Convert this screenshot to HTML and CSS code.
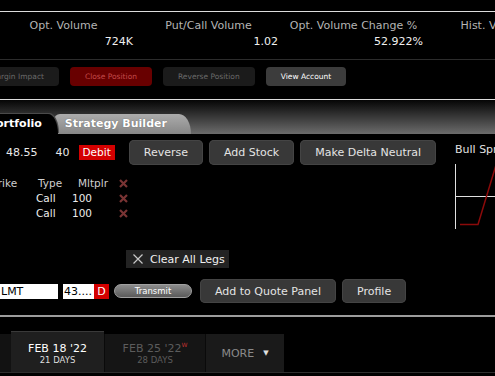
FILE: index.html
```html
<!DOCTYPE html>
<html lang="en">
<head>
    <meta charset="UTF-8">
    <meta name="viewport" content="width=device-width, initial-scale=1.0">
    <title>Strategy Builder</title>
    <link rel="stylesheet" href="styles.css">
</head>
<body>
    <div class="top-rule"></div>

    <div class="stats">
        <div class="stat"><div class="stat-label">Opt. Volume</div><div class="stat-value">724K</div></div>
        <div class="stat"><div class="stat-label">Put/Call Volume</div><div class="stat-value">1.02</div></div>
        <div class="stat"><div class="stat-label">Opt. Volume Change %</div><div class="stat-value">52.922%</div></div>
        <div class="stat"><div class="stat-label">Hist. Volatility</div><div class="stat-value">31.4%</div></div>
    </div>

    <div class="actions">
        <button class="action off">Margin Impact</button>
        <button class="action close">Close Position</button>
        <button class="action off">Reverse Position</button>
        <button class="action on">View Account</button>
    </div>

    <div class="tabbar">
        <div class="tab active">Portfolio</div>
        <div class="tab strategy">Strategy Builder</div>
    </div>

    <div class="builder">
        <div class="legs">
            <div class="summary">
                <span class="price">48.55</span>
                <span class="qty">40</span>
                <span class="debit">Debit</span>
                <button class="btn first">Reverse</button>
                <button class="btn">Add Stock</button>
                <button class="btn">Make Delta Neutral</button>
            </div>

            <div class="leg-table">
                <span class="head strike">Strike</span>
                <span class="head type">Type</span>
                <span class="head mult">Mltplr</span>
                <span class="del"><svg width="9" height="9" viewBox="0 0 9 9"><path d="M1 1L8 8M8 1L1 8" stroke="#7a3434" stroke-width="2.2"/></svg></span>

                <span></span>
                <span>Call</span>
                <span>100</span>
                <span class="del"><svg width="9" height="9" viewBox="0 0 9 9"><path d="M1 1L8 8M8 1L1 8" stroke="#7a3434" stroke-width="2.2"/></svg></span>

                <span></span>
                <span>Call</span>
                <span>100</span>
                <span class="del"><svg width="9" height="9" viewBox="0 0 9 9"><path d="M1 1L8 8M8 1L1 8" stroke="#7a3434" stroke-width="2.2"/></svg></span>
            </div>

            <div class="clear-row">
                <button class="clear">
                    <svg width="10" height="10" viewBox="0 0 10 10"><path d="M0.5 0.5L9.5 9.5M9.5 0.5L0.5 9.5" stroke="#c8c8c8" stroke-width="1.2"/></svg>
                    Clear All Legs
                </button>
            </div>

            <div class="order">
                <span class="field lmt">LMT</span>
                <span class="field limit">43....</span><span class="side">D</span>
                <button class="transmit">Transmit</button>
                <button class="btn quote">Add to Quote Panel</button>
                <button class="btn">Profile</button>
            </div>
        </div>

        <div class="payoff">
            <div class="payoff-title">Bull Spread</div>
            <svg class="payoff-chart" width="60" height="65" viewBox="0 0 60 65">
                <path d="M0.5 0V65" stroke="#e0e0e0" stroke-width="1"/>
                <path d="M0 32.5H60" stroke="#e0e0e0" stroke-width="1"/>
                <path d="M5 60.5H23L41 1" stroke="#8b0a0a" stroke-width="1.5" fill="none"/>
            </svg>
        </div>
    </div>

    <div class="expiry-area">
        <div class="expiries">
            <div class="expiry prev"></div>
            <div class="expiry current">
                <div class="exp-date">FEB 18 '22</div>
                <div class="exp-days">21 DAYS</div>
            </div>
            <div class="expiry">
                <div class="exp-date">FEB 25 '22<sup class="weekly">W</sup></div>
                <div class="exp-days">28 DAYS</div>
            </div>
            <div class="expiry more">MORE <span class="caret">&#9660;</span></div>
        </div>
    </div>
</body>
</html>
```

FILE: styles.css
```css
body {
    margin: 0;
    background: #000;
    color: #e8e8e8;
    font-family: "DejaVu Sans", sans-serif;
    font-size: 11px;
    overflow: hidden;
    height: 376px;
}
button {
    font-family: "DejaVu Sans", sans-serif;
    border: none;
    padding: 0;
    cursor: pointer;
}
.top-rule {
    margin-top: 11px;
    height: 1px;
    background: #dcdcdc;
}
.stats {
    display: flex;
    height: 48px;
    box-sizing: border-box;
    padding-top: 6px;
    margin-left: -9px;
    border-bottom: 1px solid #2c2c2c;
}
.stat {
    width: 145px;
    flex-shrink: 0;
    line-height: 16px;
}
.stat-label {
    text-align: center;
    color: #b4b4b4;
}
.stat-value {
    text-align: right;
    padding-right: 3px;
    color: #f0f0f0;
}
.actions {
    display: flex;
    gap: 11px;
    height: 40px;
    box-sizing: border-box;
    padding-top: 7px;
    margin-left: -25px;
    border-bottom: 1px solid #dcdcdc;
}
.action {
    height: 19px;
    padding: 0 15px;
    font-size: 7.5px;
    border-radius: 4px;
}
.action.off {
    background: #1b1b1b;
    color: #6a6a6a;
}
.action.close {
    background: #680000;
    color: #c24a4a;
}
.action.on {
    background: #3c3c3c;
    color: #fff;
}
.tabbar {
    display: flex;
    align-items: flex-end;
    height: 34px;
    background: linear-gradient(#050505, #6c6c6c);
}
.tab {
    height: 20px;
    line-height: 20px;
    font-weight: bold;
    color: #fff;
}
.tab.active {
    background: #000;
    margin-left: -20px;
    padding: 0 16px 0 8px;
    border-radius: 0 10px 0 0 / 0 20px 0 0;
    position: relative;
    z-index: 1;
    box-shadow: 1px -1px 0 #4a4a4a;
}
.tab.strategy {
    background: linear-gradient(#acacac, #868686);
    margin-left: -4px;
    padding: 0 24px 0 11px;
    border-radius: 6px 12px 0 0 / 6px 20px 0 0;
    text-shadow: 0 0 1px #555;
}
.builder {
    display: flex;
    padding-top: 6px;
}
.legs {
    width: 455px;
    flex-shrink: 0;
}
.summary {
    display: flex;
    align-items: center;
    height: 25px;
    color: #e8e8e8;
}
.price {
    margin-left: 6px;
}
.qty {
    margin-left: 18px;
}
.debit {
    margin-left: 9px;
    height: 15px;
    line-height: 15px;
    padding: 0 4px;
    background: #d40000;
    color: #fff;
    font-size: 10.5px;
}
.btn {
    height: 25px;
    padding: 0 15px;
    margin-left: 6px;
    background: #383838;
    color: #e4e4e4;
    font-size: 11px;
    border-radius: 5px;
    box-shadow: inset 0 0 0 1px #444;
}
.btn.first {
    margin-left: 14px;
}
.leg-table {
    display: grid;
    grid-template-columns: 36px 36px 47px 12px;
    margin-top: 11px;
    line-height: 15px;
    font-size: 10.5px;
    color: #ececec;
}
.head {
    color: #cfcfcf;
}
.strike {
    margin-left: -13px;
}
.type {
    padding-left: 2px;
}
.mult {
    padding-left: 6px;
}
.del {
    display: flex;
    align-items: center;
}
.clear-row {
    display: flex;
    margin-top: 29px;
}
.clear {
    display: flex;
    align-items: center;
    gap: 7px;
    height: 18px;
    margin-left: 126px;
    padding: 0 4px 0 7px;
    background: #232323;
    color: #f0f0f0;
    font-size: 11px;
}
.order {
    display: flex;
    align-items: center;
    height: 24px;
    margin-top: 11px;
}
.order .btn {
    height: 24px;
}
.field {
    height: 15px;
    line-height: 15px;
    background: #fff;
    color: #000;
    box-sizing: border-box;
}
.lmt {
    width: 58px;
    padding-left: 1px;
}
.limit {
    width: 31px;
    margin-left: 5px;
    padding-left: 1px;
}
.side {
    width: 15px;
    height: 15px;
    line-height: 15px;
    text-align: center;
    background: #d40000;
    color: #fff;
}
.transmit {
    width: 78px;
    height: 14px;
    margin-left: 5px;
    border: 1px solid #a0a0a0;
    border-radius: 7px;
    background: linear-gradient(#8c8c8c, #5a5a5a);
    color: #fff;
    font-size: 8.5px;
    box-sizing: border-box;
}
.order .quote {
    margin-left: 8px;
}
.payoff {
    width: 120px;
    flex-shrink: 0;
}
.payoff-title {
    margin-top: 2px;
    line-height: 16px;
    color: #e0e0e0;
    white-space: nowrap;
}
.payoff-chart {
    display: block;
    margin-top: 6px;
    overflow: visible;
}
.expiry-area {
    margin-top: 12px;
    border-top: 2px solid #9c9c9c;
    padding-top: 14px;
}
.expiries {
    display: flex;
    align-items: flex-end;
    height: 41px;
    border-bottom: 1px solid #2e2e2e;
}
.expiry {
    height: 38px;
    box-sizing: border-box;
    padding-top: 8px;
    text-align: center;
    background: #151515;
    color: #5c5c5c;
    width: 101px;
    border-left: 1px solid #0a0a0a;
}
.expiry.prev {
    width: 11px;
    border-left: none;
    background: #121212;
}
.expiry.current {
    height: 41px;
    width: 93px;
    padding-top: 10px;
    background: #1f1f1f;
    border-top: 1px solid #3a3a3a;
    border-left: none;
    color: #fff;
}
.exp-date {
    line-height: 13px;
}
.exp-days {
    font-size: 8.5px;
    line-height: 11px;
}
.current .exp-days {
    color: #dedede;
}
.weekly {
    font-size: 6px;
    color: #c03030;
    vertical-align: 5px;
    line-height: 0;
}
.expiry.more {
    width: 79px;
    padding-top: 0;
    display: flex;
    align-items: center;
    justify-content: center;
    gap: 9px;
    background: #1a1a1a;
    color: #8a8a8a;
}
.caret {
    font-size: 7px;
    color: #e0e0e0;
}
```
